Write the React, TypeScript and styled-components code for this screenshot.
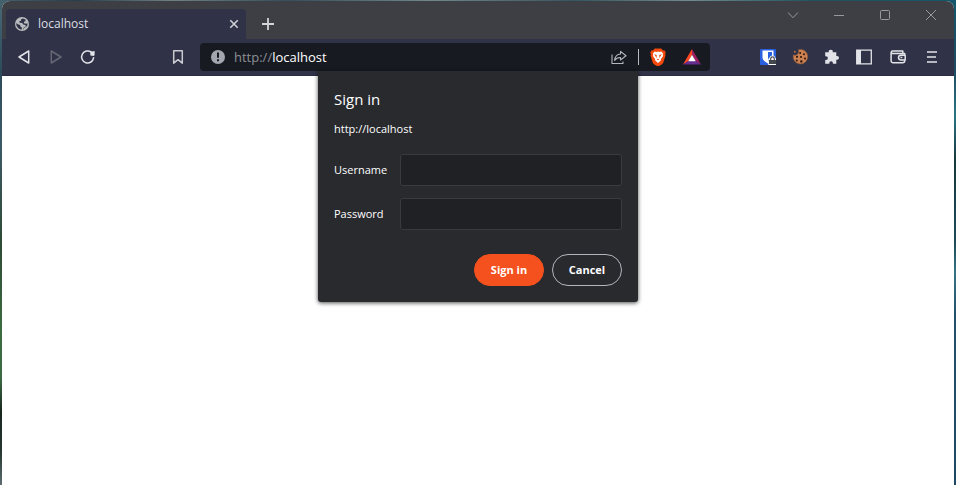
import React from "react";
import styled, { createGlobalStyle } from "styled-components";

const GlobalStyle = createGlobalStyle`
  * { box-sizing: border-box; }
  html, body { margin: 0; padding: 0; }
  body { font-family: "Open Sans", "Noto Sans", sans-serif; font-size: 12px; color: #fff; }
  button, input { font: inherit; color: inherit; }
`;

const Desktop = styled.div`
  min-height: 100vh;
  display: flex;
  flex-direction: column;
  padding: 1px 2px 0;
  background:
    linear-gradient(90deg, #43626e, #263f4d 8%, #6f8084 18%, #34505c 30%, #71878b 45%, #365660 60%, #6e8c8f 72%, #21535f 85%, #14566a) top / 100% 10px no-repeat,
    linear-gradient(#4a6a78, #2d4b5a 15%, #3c5a66 30%, #2e4b36 50%, #3b6b40 68%, #3c6a44 78%, #18261f 85%, #26372f 93%, #5b6d70) left / 50% 100% no-repeat,
    linear-gradient(#12566a, #1e4a60 14%, #2c7583 24%, #17383f 33%, #1d4a55 50%, #357585 56%, #24506a 65%, #1d4863) right / 50% 100% no-repeat;
`;

const BrowserWindow = styled.div`
  flex: 1;
  display: flex;
  flex-direction: column;
  overflow: hidden;
  border-radius: 8px 8px 0 0;
  background: #fff;
`;

const TitleBar = styled.header`
  display: flex;
  align-items: flex-end;
  height: 38px;
  padding-left: 4px;
  background: #3e3e45;
`;

const Tab = styled.div`
  display: flex;
  align-items: center;
  gap: 8px;
  width: 240px;
  height: 30px;
  padding: 0 4px 0 8px;
  border-radius: 4px 4px 0 0;
  background: #303347;
`;

const TabTitle = styled.span`
  flex: 1;
  line-height: 16px;
  color: #dcdde2;
`;

const GhostButton = styled.button<{ $width: number; $height: number; $tone?: string }>`
  display: inline-flex;
  flex: none;
  align-items: center;
  justify-content: center;
  width: ${(p) => p.$width}px;
  height: ${(p) => p.$height}px;
  padding: 0;
  border: 0;
  background: transparent;
  color: ${(p) => p.$tone ?? "#e2e3e8"};
  svg { display: block; }
`;

const NewTab = styled.div`
  margin-left: 6px;
`;

const WindowControls = styled.div`
  display: flex;
  align-self: flex-start;
  margin-left: auto;
`;

const Toolbar = styled.nav`
  display: flex;
  align-items: center;
  height: 37px;
  padding: 0 6px;
  border-bottom: 1px solid #2b2b42;
  background: #303347;
`;

const ButtonGroup = styled.div`
  display: flex;
  align-items: center;
`;

const AddressBar = styled.div`
  display: flex;
  flex: 1;
  align-items: center;
  height: 28px;
  margin: 0 42px 0 6px;
  padding: 0 1px 0 10px;
  border-radius: 4px;
  background: #171a21;
`;

const BookmarkSlot = styled.div`
  margin-left: 58px;
`;

const Address = styled.span`
  flex: 1;
  margin-left: 8px;
  font-size: 13px;
  line-height: 18px;
  color: #fff;
`;

const Scheme = styled.span`
  color: #8d8f96;
`;

const Divider = styled.span`
  width: 1px;
  height: 16px;
  margin: 0 2px;
  background: #b9bbc1;
`;

const Tools = styled(ButtonGroup)`
  > :nth-last-child(-n + 2) { margin-left: 2px; }
`;

const Page = styled.main`
  position: relative;
  flex: 1;
  display: flex;
  justify-content: center;
`;

const Dialog = styled.form`
  position: absolute;
  top: -5px;
  display: flex;
  flex-direction: column;
  width: 320px;
  padding: 17px 16px 16px;
  border-radius: 0 0 3px 3px;
  background: #292a2e;
  box-shadow: 0 1px 4px rgba(0, 0, 0, 0.7);
`;

const Title = styled.h1`
  margin: 0;
  font-size: 15px;
  font-weight: 400;
  line-height: 22px;
`;

const Origin = styled.p`
  margin: 10px 0 16px;
  font-size: 11px;
  line-height: 18px;
`;

const Field = styled.label`
  display: flex;
  align-items: center;
  margin-bottom: 12px;
`;

const FieldName = styled.span`
  width: 66px;
  font-size: 11px;
  line-height: 16px;
`;

const TextBox = styled.input`
  flex: 1;
  min-width: 0;
  height: 32px;
  padding: 0 8px;
  border: 1px solid #3a3b40;
  border-radius: 3px;
  outline: none;
  background: #202124;
`;

const Actions = styled.div`
  display: flex;
  justify-content: flex-end;
  gap: 8px;
  margin-top: 12px;
`;

const ActionButton = styled.button<{ $primary?: boolean }>`
  width: 70px;
  height: 32px;
  padding: 0;
  border: 1px solid ${(p) => (p.$primary ? "#f4511e" : "#b4b5bd")};
  border-radius: 16px;
  background: ${(p) => (p.$primary ? "#f4511e" : "transparent")};
  font-size: 11px;
  font-weight: 700;
  line-height: 18px;
`;

const GlobeIcon = () => (
  <svg width="16" height="16" viewBox="0 0 16 16" aria-hidden="true">
    <circle cx="8" cy="8" r="7" fill="#b9babd" />
    <path d="M8.8 2.4 7.2 3.2 7 4.7 5.3 5.3 5.6 6.7 8.2 7.1 9.3 8.6 11.4 9 11.9 10.4 10 11.2 8.7 13.4 7.7 13.6 7.9 11.4 6.4 10.6 6.1 9 3.9 8.2 2.4 6.9 2.3 9.2 4 12 6.5 13.5 9.3 13.5 9.9 11.9 12 11.1 13.3 9.5 13.6 7.2 12.2 7.8 10 7.2 9.9 5.7 11.6 4.9 11.4 3.6Z" fill="#303347" />
  </svg>
);

const CloseIcon = () => (
  <svg width="16" height="16" viewBox="0 0 16 16" stroke="currentColor" strokeWidth="1.6" aria-hidden="true">
    <path d="m4.3 4.3 7.4 7.4M11.7 4.3l-7.4 7.4" />
  </svg>
);

const PlusIcon = () => (
  <svg width="16" height="16" viewBox="0 0 16 16" stroke="currentColor" strokeWidth="1.8" aria-hidden="true">
    <path d="M8 2v12M2 8h12" />
  </svg>
);

const WindowIcon = ({ d }: { d: string }) => (
  <svg width="12" height="12" viewBox="0 0 12 12" fill="none" stroke="currentColor" aria-hidden="true">
    <path d={d} />
  </svg>
);

const TriangleIcon = ({ d }: { d: string }) => (
  <svg width="16" height="16" viewBox="0 0 16 16" fill="none" stroke="currentColor" strokeWidth="1.5" strokeLinejoin="round" aria-hidden="true">
    <path d={d} />
  </svg>
);

const ReloadIcon = () => (
  <svg width="16" height="16" viewBox="0 0 16 16" aria-hidden="true">
    <path d="M13.6 8.7a6 6 0 1 1-2.3-5.5" fill="none" stroke="currentColor" strokeWidth="1.5" strokeLinecap="round" />
    <path d="M10.2 2.8 14.6 2v4.1l-1 1-3.2-.7Z" fill="currentColor" />
  </svg>
);

const BookmarkIcon = () => (
  <svg width="16" height="16" viewBox="0 0 16 16" fill="none" stroke="currentColor" strokeWidth="1.5" strokeLinejoin="round" aria-hidden="true">
    <path d="M3.7 1.7h8.6v12.5L8 10.7l-4.3 3.5Z" />
  </svg>
);

const InfoIcon = () => (
  <svg width="16" height="16" viewBox="0 0 16 16" aria-hidden="true">
    <circle cx="8" cy="8" r="7" fill="#a3a6af" />
    <path d="M7 3.5h2v5.3H7zM7 10.2h2v2H7z" fill="#171a21" />
  </svg>
);

const ShareIcon = () => (
  <svg width="16" height="16" viewBox="0 0 16 16" fill="none" stroke="currentColor" strokeWidth="1.1" strokeLinejoin="round" aria-hidden="true">
    <path d="M1 5.5v9h11v-2" />
    <path d="M9.5 2.4 15 6.8 9.5 11V8.5C6.5 8.4 5 9.4 3.6 11.4 4 7.6 6.2 5.2 9.5 5Z" />
  </svg>
);

const LionIcon = () => (
  <svg width="18" height="18" viewBox="0 0 18 18" aria-hidden="true">
    <path d="M5.7.6h6.6l1.6 1.8 1.5-.1 1.4 2.3-.6 1.6.3 1.2-2.2 7.2c-.3.9-.8 1.3-1.6 1.8L9.6 18.2H8.4l-3.1-1.8c-.8-.5-1.3-.9-1.6-1.8L1.5 7.4l.3-1.2-.6-1.6 1.4-2.3 1.5.1Z" fill="#f4490c" />
    <path d="m5.7 3.5 1.7.4L9 3.6l1.6.3 1.7-.4 2 2.3-.6 1 .4 1.2-2.1 3-.2 1.5L9 15.1l-2.8-2.6-.2-1.5-2.1-3 .4-1.2-.6-1Z" fill="#fff" />
    <path d="m5.2 6.3 2.7.7-.4 1 .3 1.3-.7.4-.5-1.5Zm7.6 0-2.7.7.4 1-.3 1.3.7.4.5-1.5ZM9 10.7l1.2.8L9 12.2l-1.2-.7Z" fill="#f4490c" />
  </svg>
);

const BatIcon = () => (
  <svg width="18" height="16" viewBox="0 0 18 16" aria-hidden="true">
    <path d="M9 0 0 15.5l5.5-3.4L9 6Z" fill="#ff4724" />
    <path d="m9 0 9 15.5-5.5-3.4L9 6Z" fill="#9e1f63" />
    <path d="M0 15.5h18l-5.5-3.4h-7Z" fill="#662d91" />
    <path d="m9 5.8 3.7 6.4H5.3Z" fill="#fff" />
  </svg>
);

const VaultIcon = () => (
  <svg width="16" height="16" viewBox="0 0 16 16" aria-hidden="true">
    <rect width="16" height="16" rx="1" fill="#2a60df" />
    <path d="M2.5 1.5h11v7c0 2.7-3.2 4.6-5.5 6-2.3-1.4-5.5-3.3-5.5-6Z" fill="#fff" />
    <path d="M8 3h4v5.5c0 1.6-2.2 3-4 4.1Z" fill="#2a60df" />
    <path d="M8.3 9.5h1V9a3.2 3.2 0 0 1 6.2 0v.5h.5V16H8.3Z" fill="#fff" />
    <path d="M9 11h7v4H9z" fill="#44474c" />
    <path d="M10.7 11V9.7a1.8 1.8 0 0 1 3.6 0V11" fill="none" stroke="#44474c" strokeWidth="1.2" />
  </svg>
);

const CookieIcon = () => (
  <svg width="16" height="16" viewBox="0 0 16 16" aria-hidden="true">
    <path d="M6.2.8a3.6 3.6 0 0 1-4.8 5A7.3 7.3 0 1 0 6.2.8Z" fill="#cb8050" stroke="#8a5537" strokeWidth="0.6" />
    <circle cx="2.8" cy="2.8" r="1" fill="#b46c42" />
    <g fill="#2c1711">
      <circle cx="8.2" cy="4" r="1" />
      <circle cx="12" cy="5.3" r="1" />
      <circle cx="5" cy="7.8" r="1.1" />
      <circle cx="9" cy="8" r="1.1" />
      <circle cx="13" cy="9.4" r="1" />
      <circle cx="4.8" cy="11.6" r="1" />
      <circle cx="9.3" cy="12.4" r="1.2" />
    </g>
  </svg>
);

const PuzzleIcon = () => (
  <svg width="16" height="16" viewBox="0 0 16 16" fill="currentColor" aria-hidden="true">
    <path d="M1.2 3.2h3.6a2 2 0 1 1 3.9 0h3.6v3.7h.8a1.9 1.9 0 0 1 0 3.8h-.8v4H8.9V14a1.8 1.8 0 0 0-3.6 0v.7H1.2V11H2a1.9 1.9 0 0 0 0-3.8h-.8Z" />
  </svg>
);

const SidebarIcon = () => (
  <svg width="16" height="16" viewBox="0 0 16 16" aria-hidden="true">
    <path d="M.7 1.2h14.6v13.6H.7Z" fill="none" stroke="currentColor" strokeWidth="1.3" />
    <path d="M1 1h4v14H1z" fill="currentColor" />
  </svg>
);

const WalletIcon = () => (
  <svg width="16" height="16" viewBox="0 0 16 16" fill="none" stroke="currentColor" strokeWidth="1.5" strokeLinejoin="round" aria-hidden="true">
    <path d="M14.7 6V4.5H2.5a1.2 1.2 0 0 1 0-2.4h10.3v2.2M1.1 3.2v8.6a2 2 0 0 0 2 2h9.6a2 2 0 0 0 2-2V11M15.2 6.2h-4.3a2.4 2.4 0 0 0 0 4.8h4.3Z" />
    <path d="M10.5 8.6h1.8" />
  </svg>
);

const MenuIcon = () => (
  <svg width="16" height="16" viewBox="0 0 16 16" stroke="currentColor" strokeWidth="1.6" aria-hidden="true">
    <path d="M3 3h10M3 8h9M3 13h10" />
  </svg>
);

const windowControls = [
  { name: "Search tabs", d: "M1 3.5 6 8.7 11 3.5" },
  { name: "Minimize", d: "M1 6.5h10" },
  { name: "Maximize", d: "M2.5 1.5h7a1 1 0 0 1 1 1v7a1 1 0 0 1-1 1h-7a1 1 0 0 1-1-1v-7a1 1 0 0 1 1-1Z" },
  { name: "Close window", d: "m1 1 10 10M11 1 1 11" },
];

const tools = [
  { name: "Password vault", icon: <VaultIcon /> },
  { name: "Cookies", icon: <CookieIcon /> },
  { name: "Extensions", icon: <PuzzleIcon /> },
  { name: "Sidebar", icon: <SidebarIcon /> },
  { name: "Wallet", icon: <WalletIcon /> },
  { name: "Menu", icon: <MenuIcon /> },
];

export default function App() {
  return (
    <Desktop>
      <GlobalStyle />
      <BrowserWindow>
        <TitleBar>
          <Tab>
            <GlobeIcon />
            <TabTitle>localhost</TabTitle>
            <GhostButton type="button" $width={16} $height={16} $tone="#cfd0d6" aria-label="Close tab"><CloseIcon /></GhostButton>
          </Tab>
          <NewTab>
            <GhostButton type="button" $width={32} $height={30} $tone="#d4d4d8" aria-label="New tab"><PlusIcon /></GhostButton>
          </NewTab>
          <WindowControls>
            {windowControls.map((control) => (
              <GhostButton key={control.name} type="button" $width={46} $height={28} $tone="#98989d" aria-label={control.name}>
                <WindowIcon d={control.d} />
              </GhostButton>
            ))}
          </WindowControls>
        </TitleBar>
        <Toolbar>
          <ButtonGroup>
            <GhostButton type="button" $width={32} $height={32} aria-label="Back"><TriangleIcon d="M12.7 2v12L3 8Z" /></GhostButton>
            <GhostButton type="button" $width={32} $height={32} $tone="#656775" aria-label="Forward"><TriangleIcon d="M3.3 2v12L13 8Z" /></GhostButton>
            <GhostButton type="button" $width={32} $height={32} aria-label="Reload"><ReloadIcon /></GhostButton>
          </ButtonGroup>
          <BookmarkSlot>
            <GhostButton type="button" $width={32} $height={32} $tone="#c9cad0" aria-label="Bookmark"><BookmarkIcon /></GhostButton>
          </BookmarkSlot>
          <AddressBar>
            <InfoIcon />
            <Address><Scheme>http://</Scheme>localhost</Address>
            <GhostButton type="button" $width={34} $height={28} $tone="#b4b6bc" aria-label="Share"><ShareIcon /></GhostButton>
            <Divider />
            <GhostButton type="button" $width={34} $height={28} aria-label="Shields"><LionIcon /></GhostButton>
            <GhostButton type="button" $width={34} $height={28} aria-label="Rewards"><BatIcon /></GhostButton>
          </AddressBar>
          <Tools>
            {tools.map((tool) => (
              <GhostButton key={tool.name} type="button" $width={32} $height={32} aria-label={tool.name}>{tool.icon}</GhostButton>
            ))}
          </Tools>
        </Toolbar>
        <Page>
          <Dialog onSubmit={(event) => event.preventDefault()}>
            <Title>Sign in</Title>
            <Origin>http://localhost</Origin>
            <Field><FieldName>Username</FieldName><TextBox type="text" name="username" /></Field>
            <Field><FieldName>Password</FieldName><TextBox type="password" name="password" /></Field>
            <Actions>
              <ActionButton type="submit" $primary>Sign in</ActionButton>
              <ActionButton type="button">Cancel</ActionButton>
            </Actions>
          </Dialog>
        </Page>
      </BrowserWindow>
    </Desktop>
  );
}
